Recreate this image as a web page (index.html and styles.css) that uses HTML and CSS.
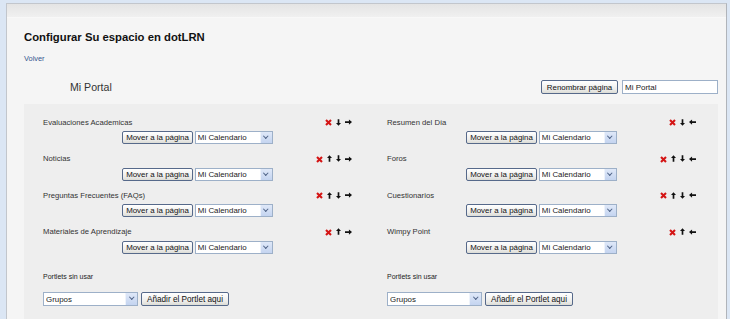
FILE: index.html
```html
<!DOCTYPE html>
<html lang="es">
<head>
  <meta charset="UTF-8" />
  <title>Configurar Su espacio en dotLRN</title>
  <link rel="stylesheet" href="styles.css">
</head>
<body>
  <div class="panel">
    <div class="panel-head"></div>
    <div class="panel-body">
      <h1>Configurar Su espacio en dotLRN</h1>
      <a class="back" href="#">Volver</a>

      <div class="page-bar">
        <span class="page-name">Mi Portal</span>
        <form class="rename">
          <button type="button" class="btn">Renombrar página</button>
          <input type="text" class="field" value="Mi Portal" />
        </form>
      </div>

      <div class="layout">
        <!-- left column -->
        <div class="column">
          <div class="portlet">
            <div class="portlet-head">
              <span class="portlet-name">Evaluaciones Academicas</span>
              <span class="tools">
                <svg class="ico-x" viewBox="0 0 7 7"><path d="M1 1 L6 6 M6 1 L1 6"/></svg>
                <svg class="ico-v" viewBox="0 0 6 8"><path d="M3 8 L6 4.5 H4 V0 H2 V4.5 H0 Z"/></svg>
                <svg class="ico-h" viewBox="0 0 8 6"><path d="M8 3 L4.5 0 V2 H0 V4 H4.5 V6 Z"/></svg>
              </span>
            </div>
            <div class="portlet-move">
              <button type="button" class="btn">Mover a la página</button>
              <span class="select"><select><option>Mi Calendario</option></select></span>
            </div>
          </div>

          <div class="portlet">
            <div class="portlet-head">
              <span class="portlet-name">Noticias</span>
              <span class="tools">
                <svg class="ico-x" viewBox="0 0 7 7"><path d="M1 1 L6 6 M6 1 L1 6"/></svg>
                <svg class="ico-v" viewBox="0 0 6 8"><path d="M3 0 L6 3.5 H4 V8 H2 V3.5 H0 Z"/></svg>
                <svg class="ico-v" viewBox="0 0 6 8"><path d="M3 8 L6 4.5 H4 V0 H2 V4.5 H0 Z"/></svg>
                <svg class="ico-h" viewBox="0 0 8 6"><path d="M8 3 L4.5 0 V2 H0 V4 H4.5 V6 Z"/></svg>
              </span>
            </div>
            <div class="portlet-move">
              <button type="button" class="btn">Mover a la página</button>
              <span class="select"><select><option>Mi Calendario</option></select></span>
            </div>
          </div>

          <div class="portlet">
            <div class="portlet-head">
              <span class="portlet-name">Preguntas Frecuentes (FAQs)</span>
              <span class="tools">
                <svg class="ico-x" viewBox="0 0 7 7"><path d="M1 1 L6 6 M6 1 L1 6"/></svg>
                <svg class="ico-v" viewBox="0 0 6 8"><path d="M3 0 L6 3.5 H4 V8 H2 V3.5 H0 Z"/></svg>
                <svg class="ico-v" viewBox="0 0 6 8"><path d="M3 8 L6 4.5 H4 V0 H2 V4.5 H0 Z"/></svg>
                <svg class="ico-h" viewBox="0 0 8 6"><path d="M8 3 L4.5 0 V2 H0 V4 H4.5 V6 Z"/></svg>
              </span>
            </div>
            <div class="portlet-move">
              <button type="button" class="btn">Mover a la página</button>
              <span class="select"><select><option>Mi Calendario</option></select></span>
            </div>
          </div>

          <div class="portlet">
            <div class="portlet-head">
              <span class="portlet-name">Materiales de Aprendizaje</span>
              <span class="tools">
                <svg class="ico-x" viewBox="0 0 7 7"><path d="M1 1 L6 6 M6 1 L1 6"/></svg>
                <svg class="ico-v" viewBox="0 0 6 8"><path d="M3 0 L6 3.5 H4 V8 H2 V3.5 H0 Z"/></svg>
                <svg class="ico-h" viewBox="0 0 8 6"><path d="M8 3 L4.5 0 V2 H0 V4 H4.5 V6 Z"/></svg>
              </span>
            </div>
            <div class="portlet-move">
              <button type="button" class="btn">Mover a la página</button>
              <span class="select"><select><option>Mi Calendario</option></select></span>
            </div>
          </div>

          <div class="unused">
            <div class="unused-title">Portlets sin usar</div>
            <div class="unused-add">
              <span class="select wide"><select><option>Grupos</option></select></span>
              <button type="button" class="btn">Añadir el Portlet aqui</button>
            </div>
          </div>
        </div>

        <!-- right column -->
        <div class="column">
          <div class="portlet">
            <div class="portlet-head">
              <span class="portlet-name">Resumen del Día</span>
              <span class="tools">
                <svg class="ico-x" viewBox="0 0 7 7"><path d="M1 1 L6 6 M6 1 L1 6"/></svg>
                <svg class="ico-v" viewBox="0 0 6 8"><path d="M3 8 L6 4.5 H4 V0 H2 V4.5 H0 Z"/></svg>
                <svg class="ico-h" viewBox="0 0 8 6"><path d="M0 3 L3.5 0 V2 H8 V4 H3.5 V6 Z"/></svg>
              </span>
            </div>
            <div class="portlet-move">
              <button type="button" class="btn">Mover a la página</button>
              <span class="select"><select><option>Mi Calendario</option></select></span>
            </div>
          </div>

          <div class="portlet">
            <div class="portlet-head">
              <span class="portlet-name">Foros</span>
              <span class="tools">
                <svg class="ico-x" viewBox="0 0 7 7"><path d="M1 1 L6 6 M6 1 L1 6"/></svg>
                <svg class="ico-v" viewBox="0 0 6 8"><path d="M3 0 L6 3.5 H4 V8 H2 V3.5 H0 Z"/></svg>
                <svg class="ico-v" viewBox="0 0 6 8"><path d="M3 8 L6 4.5 H4 V0 H2 V4.5 H0 Z"/></svg>
                <svg class="ico-h" viewBox="0 0 8 6"><path d="M0 3 L3.5 0 V2 H8 V4 H3.5 V6 Z"/></svg>
              </span>
            </div>
            <div class="portlet-move">
              <button type="button" class="btn">Mover a la página</button>
              <span class="select"><select><option>Mi Calendario</option></select></span>
            </div>
          </div>

          <div class="portlet">
            <div class="portlet-head">
              <span class="portlet-name">Cuestionarios</span>
              <span class="tools">
                <svg class="ico-x" viewBox="0 0 7 7"><path d="M1 1 L6 6 M6 1 L1 6"/></svg>
                <svg class="ico-v" viewBox="0 0 6 8"><path d="M3 0 L6 3.5 H4 V8 H2 V3.5 H0 Z"/></svg>
                <svg class="ico-v" viewBox="0 0 6 8"><path d="M3 8 L6 4.5 H4 V0 H2 V4.5 H0 Z"/></svg>
                <svg class="ico-h" viewBox="0 0 8 6"><path d="M0 3 L3.5 0 V2 H8 V4 H3.5 V6 Z"/></svg>
              </span>
            </div>
            <div class="portlet-move">
              <button type="button" class="btn">Mover a la página</button>
              <span class="select"><select><option>Mi Calendario</option></select></span>
            </div>
          </div>

          <div class="portlet">
            <div class="portlet-head">
              <span class="portlet-name">Wimpy Point</span>
              <span class="tools">
                <svg class="ico-x" viewBox="0 0 7 7"><path d="M1 1 L6 6 M6 1 L1 6"/></svg>
                <svg class="ico-v" viewBox="0 0 6 8"><path d="M3 0 L6 3.5 H4 V8 H2 V3.5 H0 Z"/></svg>
                <svg class="ico-h" viewBox="0 0 8 6"><path d="M0 3 L3.5 0 V2 H8 V4 H3.5 V6 Z"/></svg>
              </span>
            </div>
            <div class="portlet-move">
              <button type="button" class="btn">Mover a la página</button>
              <span class="select"><select><option>Mi Calendario</option></select></span>
            </div>
          </div>

          <div class="unused">
            <div class="unused-title">Portlets sin usar</div>
            <div class="unused-add">
              <span class="select wide"><select><option>Grupos</option></select></span>
              <button type="button" class="btn">Añadir el Portlet aqui</button>
            </div>
          </div>
        </div>
      </div>
    </div>
  </div>
</body>
</html>
```

FILE: styles.css
```css
html, body { height: 100%; }
body {
  margin: 0;
  padding: 3px 3px 0 6px;
  box-sizing: border-box;
  background: #dbe6f4;
  font-family: "Liberation Sans", Arial, sans-serif;
  color: #333;
  overflow: hidden;
}
.panel {
  display: flex;
  flex-direction: column;
  height: 100%;
  box-sizing: border-box;
  border: 1px solid #c2c6cc;
  border-bottom: 0;
  border-right-color: #b0b4ba;
  background: #f5f5f5;
  overflow: hidden;
}
.panel-head {
  flex: none;
  height: 13px;
  background: linear-gradient(#e4e4e4, #f0f0f0);
  border-bottom: 1px solid #f8f8f8;
}
.panel-body {
  flex: 1;
  display: flex;
  flex-direction: column;
  padding: 13px 8px 0 17px;
}

h1 {
  margin: 0;
  font-size: 11.3px;
  line-height: 13px;
  font-weight: bold;
  color: #111;
}
.back {
  display: block;
  margin-top: 10px;
  font-size: 7.4px;
  line-height: 9px;
  color: #34558f;
  text-decoration: none;
}

/* page name + rename form */
.page-bar {
  display: flex;
  align-items: center;
  justify-content: space-between;
  margin-top: 17px;
  height: 14px;
}
.page-name {
  padding-left: 46px;
  font-size: 10.6px;
  color: #333;
}
.rename { display: flex; gap: 4px; margin: 0; }
.rename .btn { width: 77px; height: 14px; }
.field {
  width: 96px;
  height: 14px;
  box-sizing: border-box;
  margin: 0;
  padding: 0 2px;
  border: 1px solid #9db0c8;
  background: #fff;
  font-family: inherit;
  font-size: 8px;
  color: #222;
}

/* controls */
.btn {
  height: 13px;
  box-sizing: border-box;
  margin: 0;
  padding: 0 3px;
  border: 1px solid #56698a;
  border-radius: 2px;
  background: linear-gradient(#ffffff, #ececea 70%, #dcdcd6);
  font-family: inherit;
  font-size: 7.9px;
  line-height: 11px;
  color: #111;
  white-space: nowrap;
}
.select {
  position: relative;
  display: block;
  width: 78px;
  height: 13px;
}
.select select {
  -webkit-appearance: none;
  appearance: none;
  display: block;
  width: 100%;
  height: 100%;
  box-sizing: border-box;
  margin: 0;
  padding: 0 0 0 2px;
  border: 1px solid #9db0c8;
  border-radius: 0;
  background: #fff;
  font-family: inherit;
  font-size: 7.9px;
  line-height: 11px;
  color: #222;
}
.select::after {
  content: "";
  position: absolute;
  top: 1px;
  right: 1px;
  bottom: 1px;
  width: 11px;
  background: linear-gradient(#dfe8f8, #c4d4f0);
  border-left: 1px solid #eef3fb;
}
.select::before {
  content: "";
  position: absolute;
  z-index: 1;
  top: 3px;
  right: 5px;
  width: 2.5px;
  height: 2.5px;
  border-right: 1.3px solid #4d6185;
  border-bottom: 1.3px solid #4d6185;
  transform: rotate(45deg);
}
.select.wide { width: 95px; }

/* portlet layout */
.layout {
  flex: 1;
  display: grid;
  grid-template-columns: 309px 309px;
  align-content: start;
  column-gap: 35px;
  margin-top: 10px;
  padding: 13px 0 8px 19px;
  background: #eeeeee;
}
.column { display: flex; flex-direction: column; }
.portlet { margin-bottom: 9.5px; }
.portlet-head {
  display: flex;
  align-items: center;
  justify-content: space-between;
  height: 10px;
}
.portlet-name { font-size: 7.7px; color: #333; }
.tools { display: flex; align-items: center; gap: 4px; }
.ico-x { width: 7px; height: 7px; margin-top: 1px; }
.ico-x path { stroke: #d41414; stroke-width: 2.1; fill: none; }
.ico-v { width: 5px; height: 7px; }
.ico-h { width: 7px; height: 6px; }
.ico-v path, .ico-h path { fill: #111; }
.portlet-move {
  display: flex;
  justify-content: center;
  gap: 2px;
  margin-top: 4px;
}

.unused { margin-top: 9px; }
.unused-title { font-size: 7px; line-height: 9px; color: #222; }
.unused-add { display: flex; gap: 3px; margin-top: 11px; }
.unused-add .select, .unused-add .btn { height: 14px; }
.unused-add .btn { width: 88px; font-size: 8.2px; }
```
